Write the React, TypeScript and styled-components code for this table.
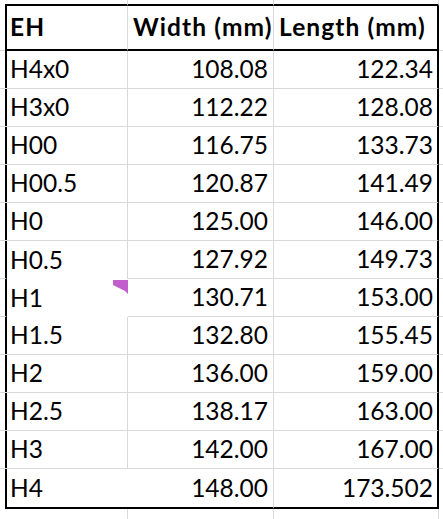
import styled, { createGlobalStyle } from "styled-components";

const GRID = "1px solid #d9d9d9";
const EDGE = "2px solid #000";
const NONE = "none";

const GlobalStyle = createGlobalStyle`
  html, body {
    margin: 0;
    padding: 0;
    background: #fff;
  }
  body {
    font-family: Lato, "Open Sans", sans-serif;
    color: #000;
  }
`;

const rows: [string, string, string][] = [
  ["H4x0", "108.08", "122.34"],
  ["H3x0", "112.22", "128.08"],
  ["H00", "116.75", "133.73"],
  ["H00.5", "120.87", "141.49"],
  ["H0", "125.00", "146.00"],
  ["H0.5", "127.92", "149.73"],
  ["H1", "130.71", "153.00"],
  ["H1.5", "132.80", "155.45"],
  ["H2", "136.00", "159.00"],
  ["H2.5", "138.17", "163.00"],
  ["H3", "142.00", "167.00"],
  ["H4", "148.00", "173.502"],
];

const Sheet = styled.div`
  display: grid;
  grid-template-columns: 5px 123px 146px 165px 4px;
  grid-template-rows: 6px 45px repeat(11, 38px) 40px 1fr;
  width: 443px;
  height: 519px;
  overflow: hidden;
`;

const Cell = styled.div<{
  $right?: string;
  $bottom?: string;
  $align?: "left" | "right";
  $bold?: boolean;
  $pad?: number;
}>`
  position: relative;
  box-sizing: border-box;
  display: flex;
  align-items: center;
  justify-content: ${({ $align }) => ($align === "right" ? "flex-end" : "flex-start")};
  padding: ${({ $align, $pad = 5 }) => ($align === "right" ? `0 ${$pad}px 0 0` : `0 0 0 ${$pad}px`)};
  border-right: ${({ $right = GRID }) => $right};
  border-bottom: ${({ $bottom = GRID }) => $bottom};
  font-size: 24.5px;
  font-weight: ${({ $bold }) => ($bold ? 700 : 400)};
  letter-spacing: ${({ $bold }) => ($bold ? "1.1px" : "0")};
  white-space: nowrap;
  line-height: 1;
`;

const CommentMark = styled.svg`
  position: absolute;
  top: 1px;
  right: 0;
  width: 15px;
  height: 14px;
`;

const App = () => {
  const last = rows.length - 1;
  return (
    <>
      <GlobalStyle />
      <Sheet>
        {/* strip above the table */}
        <Cell $bottom={NONE} $right={NONE} />
        <Cell $bottom={EDGE} />
        <Cell $bottom={EDGE} />
        <Cell $bottom={EDGE} $right={GRID} />
        <Cell $bottom={NONE} $right={NONE} />

        {/* header */}
        <Cell $right={EDGE} $bottom={GRID} />
        <Cell $bold $bottom={EDGE}>EH</Cell>
        <Cell $bold $bottom={EDGE}>Width (mm)</Cell>
        <Cell $bold $bottom={EDGE} $right={EDGE}>Length (mm)</Cell>
        <Cell $right={NONE} />

        {rows.map(([eh, w, l], i) => {
          const isLast = i === last;
          const bottom = isLast ? EDGE : GRID;
          const hideA = i === 6 || isLast;
          const aBottom = i === 5 || i === 6 ? NONE : bottom;
          return [
            <Cell key={`e${i}`} $right={EDGE} $bottom={isLast ? NONE : GRID} />,
            <Cell key={`a${i}`} $right={hideA ? NONE : GRID} $bottom={aBottom}>
              {eh}
              {i === 6 && (
                <CommentMark viewBox="0 0 15 14">
                  <polygon points="0,0 15,0 15,14 12,11 0,5" fill="#c25fcd" />
                </CommentMark>
              )}
            </Cell>,
            <Cell key={`b${i}`} $align="right" $bottom={bottom}>
              {w}
            </Cell>,
            <Cell key={`c${i}`} $align="right" $pad={4} $right={EDGE} $bottom={bottom}>
              {l}
            </Cell>,
            <Cell key={`r${i}`} $right={NONE} $bottom={isLast ? NONE : GRID} />,
          ];
        })}

        {/* strip below the table */}
        <Cell $bottom={NONE} $right={NONE} />
        <Cell $bottom={NONE} />
        <Cell $bottom={NONE} />
        <Cell $bottom={NONE} $right={GRID} />
        <Cell $bottom={NONE} $right={NONE} />
      </Sheet>
    </>
  );
};

export default App;
